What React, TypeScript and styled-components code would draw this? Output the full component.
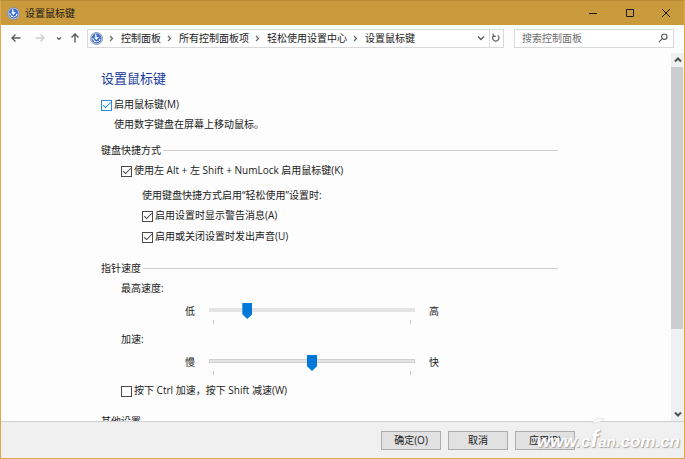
import React, { useId, useState } from 'react';
import styled, { createGlobalStyle } from 'styled-components';

const Global = createGlobalStyle`
  *, *::before, *::after { box-sizing: border-box; }
  body {
    margin: 0;
    color: #1a1a1a;
    font: 10px/20px "Open Sans", "Noto Sans CJK SC", sans-serif;
  }
  button, input { font: inherit; color: inherit; }
`;

const Window = styled.div`
  height: 100vh;
  display: flex;
  flex-direction: column;
  background: #fdfdfd;
  border: 1px solid #dba94b;
  border-top-color: #b98c35;
`;

const TitleBar = styled.header`
  flex: none;
  height: 24px;
  display: flex;
  align-items: center;
  justify-content: space-between;
  background: #ca9b3c;
`;

const Caption = styled.div`
  display: flex;
  align-items: center;
  gap: 5px;
  padding-left: 6px;
`;

const WindowButtons = styled.div`
  display: flex;
  align-self: stretch;
`;

const IconButton = styled.button<{ $width: number; $color?: string }>`
  width: ${(p) => p.$width}px;
  padding: 0;
  border: 0;
  background: transparent;
  color: ${(p) => p.$color ?? '#5c5c5c'};
  display: flex;
  align-items: center;
  justify-content: center;
  flex: none;
`;

const NavBar = styled.nav`
  flex: none;
  height: 28px;
  display: flex;
  align-items: center;
  padding: 0 10px 2px 6px;
`;

const AddressBox = styled.div`
  flex: 1;
  min-width: 0;
  height: 19px;
  display: flex;
  align-items: stretch;
  border: 1px solid #d9d9d9;
  background: #fff;
`;

const Crumbs = styled.ol`
  flex: 1;
  min-width: 0;
  display: flex;
  align-items: center;
  margin: 0;
  padding: 0 0 0 2px;
  list-style: none;
  overflow: hidden;
  white-space: nowrap;
`;

const Crumb = styled.li`
  display: flex;
  align-items: center;
  svg { margin: 0 7px 0 6px; color: #666; }
`;

const CrumbLink = styled.a`
  color: inherit;
  text-decoration: none;
`;

const RefreshDivider = styled.div`
  display: flex;
  border-left: 1px solid #d9d9d9;
`;

const SearchBox = styled.form`
  flex: none;
  width: 24%;
  height: 19px;
  margin-left: 10px;
  display: flex;
  border: 1px solid #d9d9d9;
  background: #fff;
`;

const SearchInput = styled.input`
  flex: 1;
  min-width: 0;
  padding: 0 0 0 7px;
  border: 0;
  outline: 0;
  background: transparent;
  &::placeholder { color: #6d6d6d; opacity: 1; }
`;

const Body = styled.div`
  flex: 1;
  min-height: 0;
  display: flex;
`;

const Content = styled.main`
  flex: 1;
  min-width: 0;
  overflow: hidden;
  padding: 15px 113px 0 100px;
`;

const Heading = styled.h1`
  margin: 0 0 6px;
  font-size: 13px;
  line-height: 20px;
  font-weight: 400;
  color: #17399a;
`;

const Text = styled.p<{ $indent: number; $top?: number }>`
  margin: ${(p) => p.$top ?? 0}px 0 0 ${(p) => p.$indent}px;
`;

const Group = styled.fieldset<{ $top: number }>`
  margin: ${(p) => p.$top}px 0 0;
  padding: 0;
  border: 0;
  min-width: 0;
`;

const Legend = styled.legend`
  width: 100%;
  padding: 0;
  display: flex;
  align-items: center;
  gap: 2px;
  &::after {
    content: '';
    flex: 1;
    height: 1px;
    background: #cfcfcf;
  }
`;

const CheckRow = styled.div<{ $indent: number; $top?: number }>`
  display: flex;
  align-items: center;
  gap: 2px;
  height: 20px;
  margin: ${(p) => p.$top ?? 0}px 0 0 ${(p) => p.$indent}px;
`;

const CheckInput = styled.input<{ $hot?: boolean }>`
  appearance: none;
  flex: none;
  width: 11px;
  height: 11px;
  margin: 2px 0 0;
  border: 1px solid ${(p) => (p.$hot ? '#2b8ddb' : '#4a4a4a')};
  background: #fff;
  display: grid;
  place-items: center;
  &:checked::after {
    content: '';
    width: 8px;
    height: 4px;
    margin-top: -2px;
    border: solid ${(p) => (p.$hot ? '#2b8ddb' : '#4a4a4a')};
    border-width: 0 0 1px 1px;
    transform: rotate(-45deg);
  }
`;

const SliderRow = styled.div`
  display: flex;
  align-items: flex-start;
  height: 24px;
  margin: 3px 119px 4px 84px;
`;

const EndLabel = styled.span`
  flex: none;
  width: 10px;
`;

const SliderBody = styled.div`
  flex: 1;
  min-width: 0;
  margin: 0 14px;
`;

const Range = styled.input<{ $outlined?: boolean }>`
  appearance: none;
  display: block;
  width: 100%;
  height: 18px;
  margin: 0;
  background: transparent;
  &::-webkit-slider-runnable-track {
    height: 4px;
    background: #e4e4e4;
    border: ${(p) => (p.$outlined ? '1px solid #d0d0d0' : '0')};
  }
  &::-webkit-slider-thumb {
    appearance: none;
    width: 10px;
    height: 16px;
    margin-top: -5px;
    background: #0078d7;
    clip-path: polygon(0 0, 100% 0, 100% 70%, 50% 100%, 0 70%);
  }
`;

const Ticks = styled.div`
  margin: 1px 4px 0;
  height: 4px;
  border: solid #c4c4c4;
  border-width: 0 1px;
`;

const ScrollBar = styled.div`
  flex: none;
  width: 13px;
  display: flex;
  flex-direction: column;
  background: #f0f0f0;
`;

const ScrollArrow = styled.button`
  flex: none;
  height: 14px;
  padding: 0;
  border: 0;
  background: #f0f0f0;
  color: #505050;
  display: flex;
  align-items: center;
  justify-content: center;
`;

const ScrollTrack = styled.div`
  flex: 1;
`;

const ScrollThumb = styled.div`
  height: 77%;
  margin-right: 1px;
  background: #cdcdcd;
`;

const Footer = styled.footer`
  flex: none;
  height: 37px;
  position: relative;
  display: flex;
  align-items: center;
  justify-content: flex-end;
  gap: 7px;
  padding-right: 109px;
  background: #f0f0f0;
  border-top: 1px solid #cfcfcf;
`;

const PushButton = styled.button`
  width: 60px;
  height: 19px;
  padding: 0;
  line-height: 17px;
  border: 1px solid #adadad;
  background: #e1e1e1;
`;

const Watermark = styled.div`
  position: absolute;
  right: 4px;
  bottom: 1px;
  display: flex;
  align-items: baseline;
  color: #fff;
  font: italic bold 17px/30px "Liberation Sans", sans-serif;
  text-shadow: 1px 1px 1px #a6a6a6, 0 0 1px #c4c4c4;
  pointer-events: none;
`;

const Brand = styled.span`
  position: relative;
  font-size: 15px;
  &::first-letter { font-size: 17px; }
`;

const TallLetter = styled.span`
  font-size: 24px;
`;

const Leaf = styled.svg`
  position: absolute;
  left: 10px;
  top: -6px;
`;

const EaseIcon = ({ size }: { size: number }) => (
  <svg width={size} height={size} viewBox="0 0 14 14" aria-hidden="true">
    <circle cx="7" cy="7" r="6.5" fill="#c9d2e2" stroke="#7886a5" strokeWidth=".8" />
    <circle cx="7" cy="7" r="5.3" fill="#3f6fd0" />
    <path d="M3.2 6.6A3.8 3.8 0 0 0 10.8 7" fill="none" stroke="#fff" strokeWidth="1.2" strokeDasharray="2.4 .6" />
    <path d="M5.2 2.6L6.8 2.4L7.2 5.6L9.6 5.4L7 8.6L4.4 6L5.8 5.8Z" fill="#fff" />
  </svg>
);

const Icon = ({ d, w = 10, h = 10, sw = 1.2 }: { d: string; w?: number; h?: number; sw?: number }) => (
  <svg width={w} height={h} viewBox={`0 0 ${w} ${h}`} fill="none" stroke="currentColor" strokeWidth={sw} aria-hidden="true">
    <path d={d} />
  </svg>
);

type CheckProps = { label: string; indent: number; top?: number; initial?: boolean; hot?: boolean };

function Check({ label, indent, top, initial = true, hot }: CheckProps) {
  const id = useId();
  const [on, setOn] = useState(initial);
  return (
    <CheckRow $indent={indent} $top={top}>
      <CheckInput id={id} type="checkbox" $hot={hot} checked={on} onChange={(e) => setOn(e.target.checked)} />
      <label htmlFor={id}>{label}</label>
    </CheckRow>
  );
}

type SliderProps = { title: string; low: string; high: string; initial: number; outlined?: boolean };

function Slider({ title, low, high, initial, outlined }: SliderProps) {
  const id = useId();
  const [value, setValue] = useState(initial);
  return (
    <>
      <Text as="div" $indent={20}><label htmlFor={id}>{title}</label></Text>
      <SliderRow>
        <EndLabel>{low}</EndLabel>
        <SliderBody>
          <Range id={id} type="range" $outlined={outlined} value={value} onChange={(e) => setValue(Number(e.target.value))} />
          <Ticks />
        </SliderBody>
        <EndLabel>{high}</EndLabel>
      </SliderRow>
    </>
  );
}

const crumbs = ['控制面板', '所有控制面板项', '轻松使用设置中心', '设置鼠标键'];

export default function App() {
  return (
    <>
      <Global />
      <Window>
        <TitleBar>
          <Caption><EaseIcon size={13} />设置鼠标键</Caption>
          <WindowButtons>
            <IconButton $width={37} $color="#1a1a1a" aria-label="最小化"><Icon d="M1 5.5H9" sw={1} /></IconButton>
            <IconButton $width={37} $color="#1a1a1a" aria-label="最大化"><Icon d="M1.5 1.5H8.5V8.5H1.5Z" sw={1} /></IconButton>
            <IconButton $width={36} $color="#1a1a1a" aria-label="关闭"><Icon d="M1 1L9 9M9 1L1 9" sw={1} /></IconButton>
          </WindowButtons>
        </TitleBar>
        <NavBar>
          <IconButton $width={17} aria-label="后退"><Icon d="M9.5 5H1M4.5 1.5L1 5L4.5 8.5" sw={1.4} /></IconButton>
          <IconButton $width={31} $color="#cfcfcf" aria-label="前进"><Icon d="M.5 5H9M5.5 1.5L9 5L5.5 8.5" sw={1.4} /></IconButton>
          <IconButton $width={7} aria-label="最近浏览的位置"><Icon d="M1 1.5L3 3.5L5 1.5" w={6} h={5} /></IconButton>
          <IconButton $width={25} aria-label="上移"><Icon d="M5 9.5V1M1.5 4.5L5 1L8.5 4.5" sw={1.4} /></IconButton>
          <AddressBox>
            <Crumbs>
              <li><IconButton as="span" $width={13}><EaseIcon size={13} /></IconButton></li>
              {crumbs.map((name) => (
                <Crumb key={name}>
                  <Icon d="M1 1L3.5 3.5L1 6" w={5} h={7} />
                  <CrumbLink href="#">{name}</CrumbLink>
                </Crumb>
              ))}
            </Crumbs>
            <IconButton $width={15} aria-label="历史记录"><Icon d="M1 1.5L4 4.5L7 1.5" w={8} h={6} sw={1.4} /></IconButton>
            <RefreshDivider>
              <IconButton $width={13} aria-label="刷新">
                <Icon d="M3 2.2A3.2 3.2 0 1 0 6.8 2.4M2.2 .8V3.3H4.8" w={10} h={10} />
              </IconButton>
            </RefreshDivider>
          </AddressBox>
          <SearchBox onSubmit={(e) => e.preventDefault()}>
            <SearchInput type="search" aria-label="搜索控制面板" placeholder="搜索控制面板" />
            <IconButton $width={21} aria-label="搜索">
              <Icon d="M.8 9.2L4.2 5.8M9 3.7A2.7 2.7 0 1 1 3.6 3.7A2.7 2.7 0 1 1 9 3.7Z" />
            </IconButton>
          </SearchBox>
        </NavBar>
        <Body>
          <Content>
            <Heading>设置鼠标键</Heading>
            <Check label="启用鼠标键(M)" indent={0} hot />
            <Text $indent={13}>使用数字键盘在屏幕上移动鼠标。</Text>
            <Group $top={6}>
              <Legend>键盘快捷方式</Legend>
              <Check label="使用左 Alt + 左 Shift + NumLock 启用鼠标键(K)" indent={20} />
              <Text $indent={41} $top={5}>使用键盘快捷方式启用“轻松使用”设置时:</Text>
              <Check label="启用设置时显示警告消息(A)" indent={41} />
              <Check label="启用或关闭设置时发出声音(U)" indent={41} top={1} />
            </Group>
            <Group $top={12}>
              <Legend>指针速度</Legend>
              <Slider title="最高速度:" low="低" high="高" initial={17} />
              <Slider title="加速:" low="慢" high="快" initial={50} outlined />
              <Check label="按下 Ctrl 加速，按下 Shift 减速(W)" indent={20} top={4} initial={false} />
            </Group>
            <Group $top={11}>
              <Legend>其他设置</Legend>
            </Group>
          </Content>
          <ScrollBar>
            <ScrollArrow aria-label="向上滚动"><Icon d="M1 4.5L4 1.5L7 4.5" w={8} h={6} sw={2} /></ScrollArrow>
            <ScrollTrack><ScrollThumb /></ScrollTrack>
            <ScrollArrow aria-label="向下滚动"><Icon d="M1 1.5L4 4.5L7 1.5" w={8} h={6} sw={2} /></ScrollArrow>
          </ScrollBar>
        </Body>
        <Footer>
          <PushButton>确定(O)</PushButton>
          <PushButton>取消</PushButton>
          <PushButton>应用(P)</PushButton>
          <Watermark>
            <span>www.</span>
            <Brand>
              c<TallLetter>f</TallLetter>an
              <Leaf width="14" height="6" viewBox="0 0 14 6" aria-hidden="true">
                <path d="M1 5C3 1 8 0 13 .5C11 4 6 5 1 5Z" fill="#fff" stroke="#c4c4c4" strokeWidth=".5" />
              </Leaf>
            </Brand>
            <span>.com.cn</span>
          </Watermark>
        </Footer>
      </Window>
    </>
  );
}
